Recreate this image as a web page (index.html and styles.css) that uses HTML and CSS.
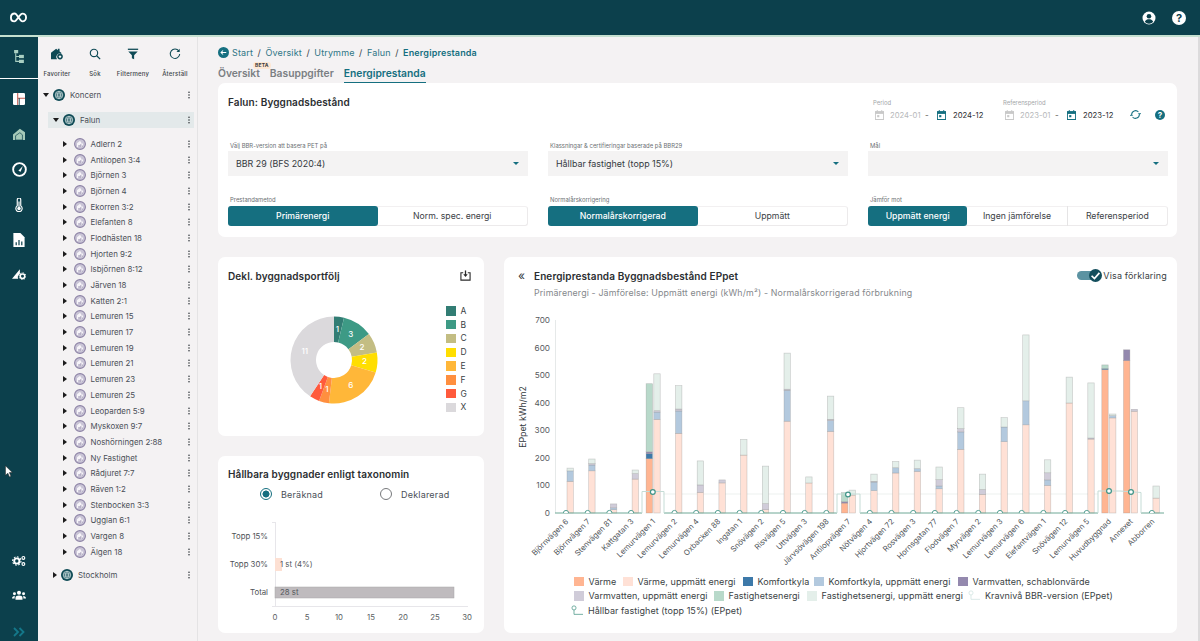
FILE: index.html
```html
<!DOCTYPE html>
<html lang="sv">
<head>
<meta charset="utf-8">
<title>Energiprestanda</title>
<link rel="stylesheet" href="styles.css">
</head>
<body>
<svg class="sprite" aria-hidden="true">
  <symbol id="kebab" viewBox="0 0 4 10"><circle cx="2" cy="1.5" r="1"/><circle cx="2" cy="5" r="1"/><circle cx="2" cy="8.5" r="1"/></symbol>
  <symbol id="tri-r" viewBox="0 0 4 6"><path d="M0 0l4 3-4 3z"/></symbol>
  <symbol id="tri-d" viewBox="0 0 6 4"><path d="M0 0h6L3 4z"/></symbol>
  <symbol id="globe" viewBox="0 0 12 12"><circle cx="6" cy="6" r="6" fill="#0e4a55"/><g fill="none" stroke="#d8e6e6" stroke-width=".7"><circle cx="6" cy="6" r="3.8"/><path d="M2.2 6h7.6M2.8 4.2h6.4M2.8 7.8h6.4M6 2.2c-2 2.4-2 5.2 0 7.6M6 2.2c2 2.4 2 5.2 0 7.6"/></g></symbol>
  <symbol id="building" viewBox="0 0 12 12"><circle cx="6" cy="6" r="5.4" fill="#c9c4d6" stroke="#8c82a5" stroke-width="1.1"/><path d="M3 9V5.2L5.8 3l1.4 1.1V5.6H9V9z" fill="#f6f4f8"/><path d="M4.6 9V7h.9v2zM6.4 9V6.3h.9V9zM8 9V7.4h.6V9z" fill="#8c82a5"/></symbol>
  <symbol id="cal" viewBox="0 0 10 11"><path d="M2 0h1v1.4h4V0h1v1.4h2V11H0V1.4h2zM1 4v6h8V4z"/><rect x="0" y="1.4" width="10" height="2.6"/><rect x="2.4" y="5.6" width="2.4" height="2.4"/></symbol>
</svg>

<header class="topbar">
  <svg class="logo" viewBox="0 0 18 11"><path d="M5 1.2C2.6 1.2 1 3 1 5.4s1.5 4.2 3.6 4.2c3 0 5.4-8.2 8.6-8.2 2.2 0 3.8 1.8 3.8 4s-1.6 4.2-3.8 4.2C10.400 9.600 7.600 1.200 5 1.200z"/></svg>
  <div class="topbar-actions">
    <svg class="top-icon" viewBox="0 0 14 14"><circle cx="7" cy="7" r="6.500" fill="#fff"/><circle cx="7" cy="5.200" r="2.300" fill="#0c404c"/><path d="M2.800 10.800c1-1.900 2.500-2.500 4.200-2.500s3.200.6 4.200 2.500c-1.100 1.300-2.500 2-4.200 2s-3.100-.7-4.200-2z" fill="#0c404c"/></svg>
    <span class="top-help">?</span>
  </div>
</header>
<div class="strip"></div>

<div class="shell">
  <nav class="rail">
    <div class="rail-item rail-active">
      <svg class="rail-icon" viewBox="0 0 14 16"><g fill="#a9cfc2"><rect x="1" y="0" width="5" height="4"/><rect x="7" y="6" width="6" height="4"/><rect x="7" y="12" width="6" height="4"/></g><path d="M3 4v10h4M3 8h4" fill="none" stroke="#a9cfc2" stroke-width="1.300"/></svg>
    </div>
    <div class="rail-group">
      <svg class="rail-icon" viewBox="0 0 14 14"><rect width="14" height="14" rx="1.500" fill="#fff"/><path d="M5.500 0v14M5.500 6h8.500" stroke="#c2584c" stroke-width="1.200"/><path d="M7.300 6v8" stroke="#0c404c" stroke-width="1"/></svg>
      <svg class="rail-icon" viewBox="0 0 14 14"><path d="M0 14V7.500L8 1l6 4v9z" fill="#a5c9b8"/><path d="M3 14V9l5-3.500L11 8v6z" fill="none" stroke="#0c404c" stroke-width=".8"/></svg>
      <svg class="rail-icon gauge" viewBox="0 0 16 16"><circle cx="8" cy="8" r="6.800" fill="none" stroke="#fff" stroke-width="2"/><path d="M6.800 9.400L11.500 4.200 9.200 10.400z" fill="#fff"/></svg>
      <svg class="rail-icon" viewBox="0 0 10 16"><path d="M3 9V2a2 2 0 014 0v7a3.600 3.600 0 11-4 0z" fill="none" stroke="#fff" stroke-width="1.300"/><circle cx="5" cy="12" r="2" fill="#fff"/><path d="M5 4v7" stroke="#fff" stroke-width="1.300"/></svg>
      <svg class="rail-icon" viewBox="0 0 12 15"><path d="M0 0h7.500L12 4.500V15H0z" fill="#fff"/><path d="M3 13V10M6 13V7.500M9 13V9" stroke="#0c404c" stroke-width="1.300"/></svg>
      <svg class="rail-icon wide" viewBox="0 0 16 13"><path d="M0 12L9 1v5.500A4.500 4.500 0 007 12z" fill="#fff"/><circle cx="12" cy="9" r="2.600" fill="none" stroke="#fff" stroke-width="1.800"/><circle cx="12" cy="9" r="3.900" fill="none" stroke="#fff" stroke-width="1" stroke-dasharray="1.500 1.500"/></svg>
    </div>
    <div class="rail-bottom">
      <svg class="rail-icon wide" viewBox="0 0 16 12"><circle cx="5.500" cy="6" r="3" fill="none" stroke="#fff" stroke-width="2.200"/><circle cx="5.500" cy="6" r="4.800" fill="none" stroke="#fff" stroke-width="1.200" stroke-dasharray="2 1.700"/><circle cx="13" cy="2.500" r="1.600" fill="none" stroke="#fff" stroke-width="1.300"/><circle cx="13" cy="9.500" r="1.600" fill="none" stroke="#fff" stroke-width="1.300"/></svg>
      <svg class="rail-icon wide" viewBox="0 0 16 11"><g fill="#fff"><circle cx="8" cy="3" r="2.300"/><circle cx="2.800" cy="4" r="1.700"/><circle cx="13.200" cy="4" r="1.700"/><path d="M4 11V8.500C4 7 5.800 6 8 6s4 1 4 2.500V11z"/><path d="M0 9.500C0 7.500 1.200 6.500 3 6.500l.3.100C3 7.300 3 8 3 9.500zM16 9.500c0-2-1.200-3-3-3l-.3.100c.3.700.3 1.400.3 2.900z"/></g></svg>
      <svg class="rail-icon chev" viewBox="0 0 12 10"><path d="M1 1l4 4-4 4M6.500 1l4 4-4 4" fill="none" stroke="#14788a" stroke-width="1.800"/></svg>
    </div>
  </nav>

  <aside class="panel">
    <div class="tools">
      <div class="tool">
        <svg class="tool-icon" viewBox="0 0 14 14"><path d="M0 13V5.500L6 1l2 1.500V1h2v3l2 1.500V7a4 4 0 00-5 6z" fill="#0e4a55"/><circle cx="10.500" cy="10" r="3.300" fill="#0e4a55"/><path d="M10.500 8l.6 1.400 1.400.1-1.100.9.400 1.400-1.300-.8-1.300.8.400-1.400-1.100-.9 1.400-.1z" fill="#fff"/></svg>
        <span>Favoriter</span>
      </div>
      <div class="tool">
        <svg class="tool-icon" viewBox="0 0 14 14"><circle cx="5.800" cy="5.800" r="4.300" fill="none" stroke="#0e4a55" stroke-width="1.300"/><path d="M9 9l4 4" stroke="#0e4a55" stroke-width="1.500"/></svg>
        <span>Sök</span>
      </div>
      <div class="tool">
        <svg class="tool-icon" viewBox="0 0 14 14"><path d="M1 1.500h12" stroke="#0e4a55" stroke-width="1.500"/><path d="M1.500 4h11L8.300 8.500V13l-2.600-1V8.500z" fill="#0e4a55"/></svg>
        <span>Filtermeny</span>
      </div>
      <div class="tool tool-last">
        <svg class="tool-icon" viewBox="0 0 14 14"><path d="M11.500 3.500A5.500 5.500 0 1012.500 7" fill="none" stroke="#0e4a55" stroke-width="1.200"/><path d="M12.500 1v3.800H8.700z" fill="#0e4a55"/></svg>
        <span>Återställ</span>
      </div>
    </div>
    <div class="tree">
      <div class="node node-root">
        <svg class="tri-d"><use href="#tri-d"/></svg><svg class="round"><use href="#globe"/></svg><span class="node-name">Koncern</span><svg class="kebab"><use href="#kebab"/></svg>
      </div>
      <div class="node node-city node-selected">
        <svg class="tri-d"><use href="#tri-d"/></svg><svg class="round"><use href="#globe"/></svg><span class="node-name">Falun</span><svg class="kebab"><use href="#kebab"/></svg>
      </div>
      <div class="leaves" id="leaves"></div>
      <div class="node node-city">
        <svg class="tri-r"><use href="#tri-r"/></svg><svg class="round"><use href="#globe"/></svg><span class="node-name">Stockholm</span><svg class="kebab"><use href="#kebab"/></svg>
      </div>
    </div>
  </aside>

  <main class="main">
    <div class="crumbs">
      <svg class="back" viewBox="0 0 12 12"><circle cx="6" cy="6" r="6" fill="#156f80"/><path d="M9 6H3.500M5.500 3.800L3.300 6l2.200 2.200" fill="none" stroke="#fff" stroke-width="1.100"/></svg>
      <span class="crumb">Start</span><span class="sep">/</span>
      <span class="crumb">Översikt</span><span class="sep">/</span>
      <span class="crumb">Utrymme</span><span class="sep">/</span>
      <span class="crumb">Falun</span><span class="sep">/</span>
      <span class="crumb crumb-current">Energiprestanda</span>
    </div>
    <div class="tabs">
      <span class="tab tab-beta">Översikt<em class="beta">BETA</em></span>
      <span class="tab">Basuppgifter</span>
      <span class="tab tab-active">Energiprestanda</span>
    </div>

    <section class="card filters">
      <div class="filter-top">
        <h1 class="card-title">Falun: Byggnadsbestånd</h1>
        <div class="periods">
          <div class="period">
            <label class="tiny tiny-muted">Period</label>
            <div class="period-row">
              <svg class="cal cal-off"><use href="#cal"/></svg><span class="date date-off">2024-01</span><span class="date-dash">-</span>
              <svg class="cal"><use href="#cal"/></svg><span class="date">2024-12</span>
            </div>
          </div>
          <div class="period period-ref">
            <label class="tiny tiny-muted">Referensperiod</label>
            <div class="period-row">
              <svg class="cal cal-off"><use href="#cal"/></svg><span class="date date-off">2023-01</span><span class="date-dash">-</span>
              <svg class="cal"><use href="#cal"/></svg><span class="date">2023-12</span>
            </div>
          </div>
          <svg class="sync" viewBox="0 0 12 12"><path d="M1.800 6a4.200 4.200 0 017.400-2.700M10.200 6a4.200 4.200 0 01-7.400 2.700" fill="none" stroke="#156f80" stroke-width="1.100"/><path d="M7.500 3.800l2.700.3.300-2.700zM4.500 8.200l-2.700-.3-.3 2.700z" fill="#156f80" transform="rotate(30 6 6)"/></svg>
          <span class="help">?</span>
        </div>
      </div>
      <div class="filter-grid">
        <div class="field">
          <label class="tiny">Välj BBR-version att basera PET på</label>
          <div class="select"><span>BBR 29 (BFS 2020:4)</span><i class="caret"></i></div>
        </div>
        <div class="field">
          <label class="tiny">Klassningar &amp; certifieringar baserade på BBR29</label>
          <div class="select"><span>Hållbar fastighet (topp 15%)</span><i class="caret"></i></div>
        </div>
        <div class="field">
          <label class="tiny">Mål</label>
          <div class="select"><span></span><i class="caret"></i></div>
        </div>
        <div class="field">
          <label class="tiny">Prestandametod</label>
          <div class="segments">
            <span class="seg seg-on">Primärenergi</span><span class="seg">Norm. spec. energi</span>
          </div>
        </div>
        <div class="field">
          <label class="tiny">Normalårskorrigering</label>
          <div class="segments">
            <span class="seg seg-on">Normalårskorrigerad</span><span class="seg">Uppmätt</span>
          </div>
        </div>
        <div class="field">
          <label class="tiny">Jämför mot</label>
          <div class="segments">
            <span class="seg seg-on">Uppmätt energi</span><span class="seg">Ingen jämförelse</span><span class="seg">Referensperiod</span>
          </div>
        </div>
      </div>
    </section>

    <div class="lower">
      <div class="lower-left">
        <section class="card donut-card">
          <div class="card-head">
            <h2 class="card-title">Dekl. byggnadsportfölj</h2>
            <svg class="download" viewBox="0 0 12 12"><path d="M3.500 3H1v8h10V3H8.500" fill="none" stroke="#2b2b2b" stroke-width="1.200"/><path d="M6 .5V6" stroke="#2b2b2b" stroke-width="1.400"/><path d="M3.600 4.500L6 7.500l2.400-3z" fill="#2b2b2b"/></svg>
          </div>
          <div class="donut-body">
            <svg class="donut" id="donut" viewBox="-50 -50 100 100"></svg>
            <ul class="donut-legend">
              <li><i class="sw g-a"></i>A</li>
              <li><i class="sw g-b"></i>B</li>
              <li><i class="sw g-c"></i>C</li>
              <li><i class="sw g-d"></i>D</li>
              <li><i class="sw g-e"></i>E</li>
              <li><i class="sw g-f"></i>F</li>
              <li><i class="sw g-g"></i>G</li>
              <li><i class="sw g-x"></i>X</li>
            </ul>
          </div>
        </section>
        <section class="card taxo-card">
          <h2 class="card-title">Hållbara byggnader enligt taxonomin</h2>
          <div class="radios">
            <span class="radio radio-on"><i></i>Beräknad</span>
            <span class="radio"><i></i>Deklarerad</span>
          </div>
          <svg class="taxo" viewBox="218 520 266 105">
            <path class="taxo-line" d="M272 521.500h4M275.500 521.500V605M272 605.500H468"/>
            <text class="taxo-label" x="268" y="538">Topp 15%</text>
            <text class="taxo-label" x="268" y="566">Topp 30%</text>
            <text class="taxo-label" x="268" y="594">Total</text>
            <rect class="taxo-one" x="275" y="557" width="7" height="13"/>
            <rect class="taxo-all" x="275" y="586" width="179" height="11"/>
            <text class="taxo-val" x="280" y="566">1 st (4%)</text>
            <text class="taxo-val" x="280" y="594">28 st</text>
            <text class="taxo-tick" x="275" y="619">0</text>
            <text class="taxo-tick" x="307" y="619">5</text>
            <text class="taxo-tick" x="339" y="619">10</text>
            <text class="taxo-tick" x="371" y="619">15</text>
            <text class="taxo-tick" x="403" y="619">20</text>
            <text class="taxo-tick" x="435" y="619">25</text>
            <text class="taxo-tick" x="467" y="619">30</text>
          </svg>
        </section>
      </div>

      <section class="card chart-card">
        <div class="chart-head">
          <span class="collapse">«</span>
          <h2 class="card-title">Energiprestanda Byggnadsbestånd EPpet</h2>
          <span class="toggle"><i class="toggle-track"></i><i class="toggle-knob"><svg viewBox="0 0 10 10"><path d="M2 5.200l2.200 2.200L8 3" fill="none" stroke="#fff" stroke-width="1.300"/></svg></i></span>
          <span class="toggle-label">Visa förklaring</span>
        </div>
        <p class="chart-sub">Primärenergi - Jämförelse: Uppmätt energi (kWh/m²) - Normalårskorrigerad förbrukning</p>
        <svg class="chart" id="chart" viewBox="504 305 673 265"></svg>
        <div class="legend">
          <div class="legend-row">
            <span class="lg lg-1"><i class="sw s-H"></i>Värme</span>
            <span class="lg lg-2"><i class="sw s-h"></i>Värme, uppmätt energi</span>
            <span class="lg lg-3"><i class="sw s-C"></i>Komfortkyla</span>
            <span class="lg lg-4"><i class="sw s-c"></i>Komfortkyla, uppmätt energi</span>
            <span class="lg"><i class="sw s-W"></i>Varmvatten, schablonvärde</span>
          </div>
          <div class="legend-row">
            <span class="lg lg-5"><i class="sw s-w"></i>Varmvatten, uppmätt energi</span>
            <span class="lg lg-6"><i class="sw s-P"></i>Fastighetsenergi</span>
            <span class="lg lg-7"><i class="sw s-p"></i>Fastighetsenergi, uppmätt energi</span>
            <span class="lg"><svg class="lg-line pale" viewBox="0 0 14 12"><circle cx="3.500" cy="3" r="2.400"/><path d="M3.500 5.400V10.500H14"/></svg>Kravnivå BBR-version (EPpet)</span>
          </div>
          <div class="legend-row">
            <span class="lg"><svg class="lg-line" viewBox="0 0 14 12"><circle cx="3.500" cy="3" r="2.400"/><path d="M3.500 5.400V10.500H14"/></svg>Hållbar fastighet (topp 15%) (EPpet)</span>
          </div>
        </div>
      </section>
    </div>
  </main>
</div>

<svg class="cursor" viewBox="0 0 9 14"><path d="M.5.500v10.800l2.700-2.400 1.800 4.200 1.700-.8-1.800-4.100h3.400z" fill="#fff" stroke="#222" stroke-width=".6"/></svg>
<script src="app.js"></script>
</body>
</html>
```
FILE: styles.css
```css
* { box-sizing: border-box; }
html, body { margin: 0; height: 100%; overflow: hidden; }
body { font-family: "Inter", "Liberation Sans", sans-serif; color: #33393d; background: #f4f2f3; font-size: 9px; }
.sprite { position: absolute; width: 0; height: 0; }
svg { display: block; }

.topbar { height: 35px; background: #0c404c; display: flex; align-items: center; justify-content: space-between; padding: 0 14px 0 10px; }
.logo { width: 17px; height: 11px; fill: none; stroke: #fff; stroke-width: 2; }
.topbar-actions { display: flex; align-items: center; gap: 16px; }
.top-icon { width: 14px; height: 14px; }
.top-help { width: 14px; height: 14px; border-radius: 50%; background: #fff; color: #0c404c; font-size: 11px; font-weight: 700; line-height: 14px; text-align: center; }
.strip { height: 2px; background: #c5e0d0; }

.shell { display: flex; height: 604px; }

.rail { width: 38px; flex: none; background: #0c404c; display: flex; flex-direction: column; align-items: center; }
.rail-item { width: 100%; height: 42px; border-bottom: 1px solid #fff; display: flex; align-items: center; justify-content: center; padding-bottom: 2px; }
.rail-group { display: flex; flex-direction: column; align-items: center; gap: 21.300px; margin-top: 13px; }
.rail-bottom { display: flex; flex-direction: column; align-items: center; gap: 22px; margin-top: auto; padding-bottom: 4px; }
.rail-icon { width: 12px; height: 13px; }
.rail-group .rail-icon { height: 14px; }
.rail-group .rail-icon.gauge { width: 15px; height: 15px; margin: -.5px 0; }
.rail-icon.wide { width: 14px; height: 12px; }
.rail-icon.chev { width: 12px; height: 10px; margin-top: 4px; }

.panel { width: 160px; flex: none; background: #f4f2f3; border-right: 1px solid #e4e3e4; }
.tools { display: flex; padding: 11px 0 0; height: 44px; }
.tool { display: flex; flex-direction: column; align-items: center; gap: 10px; width: 38px; }
.tool-last { margin-left: 4px; }
.tool span { font-size: 6px; font-weight: 500; color: #3c4448; white-space: nowrap; letter-spacing: .2px; }
.tool-icon { width: 12px; height: 12px; }

.tree { padding: 6px 3px 0 0; }
.node { display: flex; align-items: center; height: 16px; position: relative; }
.node-name { font-size: 7.900px; color: #4a4f57; flex: 1; }
.kebab { width: 4px; height: 8px; fill: #33393d; margin-right: 3px; flex: none; }
.tri-d { width: 6px; height: 4px; fill: #1c1c1c; flex: none; }
.tri-r { width: 4px; height: 6px; fill: #1c1c1c; flex: none; }
.round { width: 12px; height: 12px; flex: none; }
.node-root { padding-left: 5px; margin-bottom: 9px; }
.node-root .round { margin: 0 5px 0 4px; }
.node-city { margin-left: 10px; padding-left: 5px; }
.node-city .round { margin: 0 5px 0 4px; }
.node-selected { background: #e3e9ea; margin-bottom: 8px; }
.leaves { margin-bottom: 7px; }
.leaf { height: 15.700px; margin-left: 25px; padding-left: 0; }
.leaf .tri-r { margin-right: 7px; }
.leaf .round { margin-right: 4.500px; }

.main { flex: 1; padding: 8px 21px 0 20px; min-width: 0; border-right: 2px solid #dcdbdc; }
.crumbs { display: flex; align-items: center; height: 15px; font-size: 9px; color: #2f7686; letter-spacing: .15px; }
.back { width: 11px; height: 11px; margin-right: 3px; }
.sep { margin: 0 4.500px; color: #3a3f44; }
.crumb-current { font-weight: 600; color: #156f80; }
.tabs { display: flex; gap: 10px; height: 23px; align-items: flex-end; font-size: 10.300px; font-weight: 600; color: #7b7f83; }
.tab { position: relative; height: 17px; line-height: 15px; }
.tab-active { color: #156f80; border-bottom: 1.500px solid #156f80; }
.beta { position: absolute; left: 35px; top: -4px; background: #fde7d4; color: #3a3a3a; font-style: normal; font-weight: 700; font-size: 5px; line-height: 7px; padding: 0 2px; border-radius: 3px; letter-spacing: .2px; }

.card { background: #fff; border-radius: 7px; }
.card-title { margin: 0; font-size: 10px; font-weight: 600; color: #2b2e31; letter-spacing: .1px; }

.filters { padding: 0 10px; height: 154px; }
.filter-top { display: flex; justify-content: space-between; height: 58px; padding-top: 13px; }
.periods { display: flex; align-items: flex-end; height: 26px; padding-right: 2px; }
.period { width: 130px; }
.period-ref { width: 125px; }
.tiny { display: block; font-size: 5.900px; color: #6b6f73; line-height: 9px; }
.tiny-muted { color: #a4a6a9; margin-left: -2px; }
.period-row { display: flex; align-items: center; height: 14px; margin-top: 1px; }
.cal { width: 9px; height: 10px; fill: #156f80; flex: none; margin-right: 7px; }
.cal-off { fill: #c9c9c9; margin-right: 6px; }
.date { font-size: 7.700px; color: #2b2e31; width: 31px; }
.date-off { color: #b6b8ba; }
.date-dash { color: #555; width: 12px; margin-left: 4px; font-size: 8px; }
.sync { width: 11px; height: 11px; margin: 0 14px 2px 0; }
.help { width: 10px; height: 10px; border-radius: 50%; background: #156f80; color: #fff; font-size: 8px; font-weight: 700; line-height: 10px; text-align: center; margin-bottom: 2px; }

.filter-grid { display: grid; grid-template-columns: repeat(3, 300px); column-gap: 20px; row-gap: 19px; }
.field .tiny { padding-left: 2px; height: 10px; }
.select { height: 25px; background: #f4f3f3; display: flex; align-items: center; justify-content: space-between; padding: 0 8px; font-size: 8.900px; color: #33393d; }
.caret { width: 0; height: 0; border-left: 3px solid transparent; border-right: 3px solid transparent; border-top: 3.500px solid #156f80; margin-right: 1px; }
.segments { display: flex; height: 20px; margin-top: 1px; border-right: 1px solid #eceaeb; border-bottom: 1px solid #eceaeb; border-top: 1px solid #f2f0f1; border-radius: 3px; }
.seg { flex: 1; display: flex; align-items: center; justify-content: center; font-size: 8.700px; color: #3b4145; border-right: 1px solid #e5e4e5; margin-top: -1px; height: 20px; }
.seg:last-child { border-right: 0; }
.seg-on { background: #156f80; color: #fff; font-weight: 500; border-radius: 3px; border-right: 0; }

.lower { display: grid; grid-template-columns: 266px 673px; column-gap: 20px; margin-top: 20px; }
.lower-left { display: flex; flex-direction: column; gap: 20px; }
.donut-card { height: 179px; padding: 12px 10px; }
.card-head { display: flex; align-items: center; justify-content: space-between; height: 13px; }
.download { width: 11px; height: 11px; margin-right: 3px; }
.donut-body { position: relative; height: 140px; }
.donut { position: absolute; left: 56px; top: 28px; width: 100px; height: 100px; }
.donut text { font-size: 8px; fill: #fff; text-anchor: middle; dominant-baseline: middle; font-weight: 500; }
.g-a { background: #327d74; fill: #327d74; }
.g-b { background: #3d9a85; fill: #3d9a85; }
.g-c { background: #c3bd83; fill: #c3bd83; }
.g-d { background: #ffde00; fill: #ffde00; }
.g-e { background: #ffb739; fill: #ffb739; }
.g-f { background: #ff8f3f; fill: #ff8f3f; }
.g-g { background: #ff5a3c; fill: #ff5a3c; }
.g-x { background: #dbd9dc; fill: #dbd9dc; }
.donut-legend { position: absolute; left: 218px; top: 22px; list-style: none; margin: 0; padding: 0; font-size: 8.500px; color: #3a3f44; }
.donut-legend li { display: flex; align-items: center; gap: 5px; height: 13.800px; }
.sw { display: block; width: 9.500px; height: 9.500px; flex: none; }

.taxo-card { height: 177px; padding: 12px 10px 0; }
.radios { display: flex; padding-left: 32px; margin-top: 7px; height: 14px; font-size: 9px; color: #4a4f57; }
.radio { display: flex; align-items: center; gap: 9px; flex: none; width: 120px; letter-spacing: .2px; }
.radio i { width: 12px; height: 12px; border: 1px solid #77797c; border-radius: 50%; background: #fff; }
.radio-on i { border: 1.100px solid #156f80; background: radial-gradient(circle, #156f80 0 3.200px, #fff 3.800px); }
.taxo { width: 266px; height: 105px; margin: 20px 0 0 -10px; }
.taxo-line { fill: none; stroke: #e7e6ea; stroke-width: 1; }
.taxo-label { font-size: 7.800px; text-anchor: end; fill: #4e5256; }
.taxo-val { font-size: 7.800px; fill: #55595d; }
.taxo-tick { font-size: 7.800px; text-anchor: middle; fill: #5b5f63; }
.taxo-one { fill: #fde0d3; }
.taxo-all { fill: #bfbbbe; stroke: #a9a6a9; stroke-width: .5; }

.chart-card { height: 376px; position: relative; padding: 12px 10px 0 0; }
.chart-head { display: flex; align-items: center; height: 13px; }
.collapse { width: 30px; padding-left: 14px; font-size: 12px; line-height: 12px; color: #33393d; }
.chart-head .card-title { flex: 1; }
.toggle { position: relative; width: 25px; height: 13px; margin-right: 1px; }
.toggle-track { position: absolute; left: 0; top: 2px; width: 20px; height: 9px; background: #5c93a2; border-radius: 5px; }
.toggle-knob { position: absolute; right: 0; top: 0; width: 13px; height: 13px; border-radius: 50%; background: #134e5c; }
.toggle-label { font-size: 9px; color: #3a3f44; letter-spacing: .15px; }
.chart-sub { margin: 5px 0 0 30px; font-size: 8.800px; color: #85888c; letter-spacing: .15px; line-height: 11px; }
.chart { width: 673px; height: 265px; margin-top: 7px; }
.axis-line { fill: none; stroke: #e6e9e9; stroke-width: 1; }
.axis-y { font-size: 8.200px; text-anchor: end; fill: #56595d; }
.axis-x { font-size: 7.700px; text-anchor: end; fill: #4e5358; }
.axis-title { font-size: 8.800px; text-anchor: middle; fill: #33393d; }
.bar { stroke: #8b8b8b; stroke-opacity: .45; stroke-width: .6; }
.s-H { background: #ffb592; fill: #ffb592; }
.s-h { background: #ffe1d6; fill: #ffe1d6; }
.s-C { background: #3d79a9; fill: #3d79a9; }
.s-c { background: #b3c9de; fill: #b3c9de; }
.s-W { background: #9489ae; fill: #9489ae; }
.s-w { background: #d0ccd9; fill: #d0ccd9; }
.s-P { background: #b8d9ca; fill: #b8d9ca; }
.s-p { background: #e4efea; fill: #e4efea; }
.req { fill: none; stroke: #eef1f0; stroke-width: 1.200; }
.target { fill: none; stroke: #6fa896; stroke-width: 1; }
.target-up { fill: none; stroke: #c5dcd6; stroke-width: 1; }
.arc { fill: #fff; stroke: #56a094; stroke-width: 1; }
.dot { fill: #fff; stroke: #3f9488; stroke-width: 1.200; }

.legend { padding-left: 70px; margin-top: 4px; font-size: 9px; color: #3a3f44; letter-spacing: .05px; }
.legend-row { display: flex; height: 14.500px; align-items: center; }
.lg { display: flex; align-items: center; gap: 5px; white-space: nowrap; }
.lg-1 { width: 49px; }
.lg-2 { width: 120px; }
.lg-3 { width: 71px; }
.lg-4 { width: 144px; }
.lg-5 { width: 140px; }
.lg-6 { width: 93px; }
.lg-7 { width: 164px; }
.lg-line { width: 12px; height: 11px; margin-left: -3px; fill: none; stroke: #5fa394; stroke-width: 1; flex: none; }
.lg-line.pale { stroke: #d5e6e4; }

.cursor { position: absolute; left: 5px; top: 465px; width: 8px; height: 13px; }
```
FILE: app.js
```js
// Tree leaves
var names = ["Adlern 2","Antilopen 3:4","Björnen 3","Björnen 4","Ekorren 3:2","Elefanten 8","Flodhästen 18","Hjorten 9:2","Isbjörnen 8:12","Järven 18","Katten 2:1","Lemuren 15","Lemuren 17","Lemuren 19","Lemuren 21","Lemuren 23","Lemuren 25","Leoparden 5:9","Myskoxen 9:7","Noshörningen 2:88","Ny Fastighet","Rådjuret 7:7","Räven 1:2","Stenbocken 3:3","Ugglan 6:1","Vargen 8","Älgen 18"];
document.getElementById("leaves").innerHTML = names.map(function (n) {
  return '<div class="node leaf"><svg class="tri-r"><use href="#tri-r"/></svg><svg class="round"><use href="#building"/></svg><span class="node-name">' + n + '</span><svg class="kebab"><use href="#kebab"/></svg></div>';
}).join("");

// Donut
(function () {
  var slices = [["a",1],["b",3],["c",2],["d",2],["e",6],["f",1],["g",1],["x",11]];
  var total = 27, R = 43.5, r = 18, a = -Math.PI / 2, out = "";
  slices.forEach(function (s) {
    var b = a + s[1] / total * 2 * Math.PI, m = (a + b) / 2, big = b - a > Math.PI ? 1 : 0;
    var p = function (rad, t) { return (rad * Math.cos(t)).toFixed(2) + " " + (rad * Math.sin(t)).toFixed(2); };
    out += '<path class="g-' + s[0] + '" d="M' + p(R, a) + "A" + R + " " + R + " 0 " + big + " 1 " + p(R, b) + "L" + p(r, b) + "A" + r + " " + r + " 0 " + big + " 0 " + p(r, a) + 'Z"/>';
    var lr = 30.5;
    out += '<text x="' + (lr * Math.cos(m)).toFixed(1) + '" y="' + (lr * Math.sin(m)).toFixed(1) + '">' + s[1] + "</text>";
    a = b;
  });
  document.getElementById("donut").innerHTML = out;
})();

// Stacked bars: [label, left stack | null, right stack]; stacks hold [series, top value]
var D = [
  ["Björnvägen 6",null,[["h",115],["c",153],["p",163]]],
  ["Björnvägen 7",null,[["h",153],["c",174],["w",179],["p",196]]],
  ["Stenvägen 81",null,[["h",12],["c",19],["w",33]]],
  ["Kattgatan 3",null,[["h",123],["w",143],["p",156]]],
  ["Lemurvägen 1",[["H",197],["C",215],["W",222],["P",469]],[["h",340],["c",366],["w",371],["p",505]]],
  ["Lemurvägen 2",null,[["h",289],["c",370],["w",377],["p",462]]],
  ["Lemurvägen 4",null,[["h",75],["w",102],["p",189]]],
  ["Oxbacken 88",null,[["h",109],["w",120]]],
  ["Ingatan 1",null,[["h",210],["p",267]]],
  ["Snövägen 2",null,[["h",12],["w",34],["p",170]]],
  ["Risvägen 5",null,[["h",333],["c",445],["w",449],["p",580]]],
  ["Uttvägen 3",null,[["h",109],["p",131]]],
  ["Järvsövägen 198",null,[["h",296],["c",335],["w",340],["p",424]]],
  ["Antilopvägen 7",[["H",36],["W",41],["P",74]],[["h",65],["p",83]]],
  ["Nötvägen 4",null,[["h",81],["c",112],["w",115],["p",141]]],
  ["Hjortvägen 72",null,[["h",145],["c",164],["p",187]]],
  ["Rosvägen 3",null,[["h",151],["c",161],["p",192]]],
  ["Hornsgatan 77",null,[["h",88],["c",98],["w",121],["p",167]]],
  ["Flodvägen 7",null,[["h",231],["c",294],["w",306],["p",382]]],
  ["Myrvägen 2",null,[["h",68],["w",85],["p",141]]],
  ["Lemurvägen 3",null,[["h",259],["c",312],["p",346]]],
  ["Lemurvägen 6",null,[["h",320],["c",407],["p",646]]],
  ["Elefantvägen 1",null,[["h",100],["c",120],["w",146],["p",193]]],
  ["Snövägen 12",null,[["h",399],["p",493]]],
  ["Lemurvägen 5",null,[["h",268],["w",272],["p",472]]],
  ["Huvudbyggnad",[["H",520],["C",524],["P",537]],[["h",345],["c",353],["p",359]]],
  ["Annexet",[["H",553],["W",592]],[["h",369],["w",376]]],
  ["Abborren",null,[["h",54],["p",98]]]
];
var base = 513, S = 0.2757, step = 21.7, x0 = 566;
function cx(k) { return x0 + step * k; }
function stack(st, x) {
  var prev = 0, o = "";
  st.forEach(function (s) {
    var y1 = base - s[1] * S, y0 = base - prev * S;
    o += '<rect class="bar s-' + s[0] + '" x="' + x.toFixed(1) + '" y="' + y1.toFixed(1) + '" width="6.4" height="' + (y0 - y1).toFixed(1) + '"/>';
    prev = s[1];
  });
  return o;
}
var o = '<path class="axis-line" d="M555.5 320V513"/>';
for (var v = 0; v <= 700; v += 100) {
  o += '<text class="axis-y" x="550" y="' + (base - v * S + 3).toFixed(1) + '">' + v + "</text>";
}
o += '<text class="axis-title" transform="translate(526 417) rotate(-90)">EPpet kWh/m2</text>';
o += '<path class="req" d="M663 494H837M860 494H1098"/>';
D.forEach(function (d, k) {
  var c = cx(k);
  if (d[1]) o += stack(d[1], c - 6.7);
  o += stack(d[2], c + 1);
  o += '<text class="axis-x" transform="translate(' + (c + 3).toFixed(1) + ' 522) rotate(-45)">' + d[0] + "</text>";
});
// Target line: flat at zero with raised steps
o += '<path class="target" d="M555 513H642M664 513H837M860 513H1098M1141 513H1164"/>';
o += '<path class="target-up" d="M642 513V491.500H664V513M837 513V494H860V513M1098 513V491H1120L1141 492.500V513"/>';
D.forEach(function (d, k) {
  var c = cx(k);
  if (k === 4 || k === 13 || k === 25 || k === 26) return;
  o += '<path class="arc" d="M' + (c - 2.6).toFixed(1) + " 513A2.6 2.6 0 0 1 " + (c + 2.6).toFixed(1) + ' 513"/>';
});
[[652.8,492],[848,494.5],[1109,491],[1131,492]].forEach(function (p) {
  o += '<circle class="dot" cx="' + p[0] + '" cy="' + p[1] + '" r="2.4"/>';
});
document.getElementById("chart").innerHTML = o;
```
